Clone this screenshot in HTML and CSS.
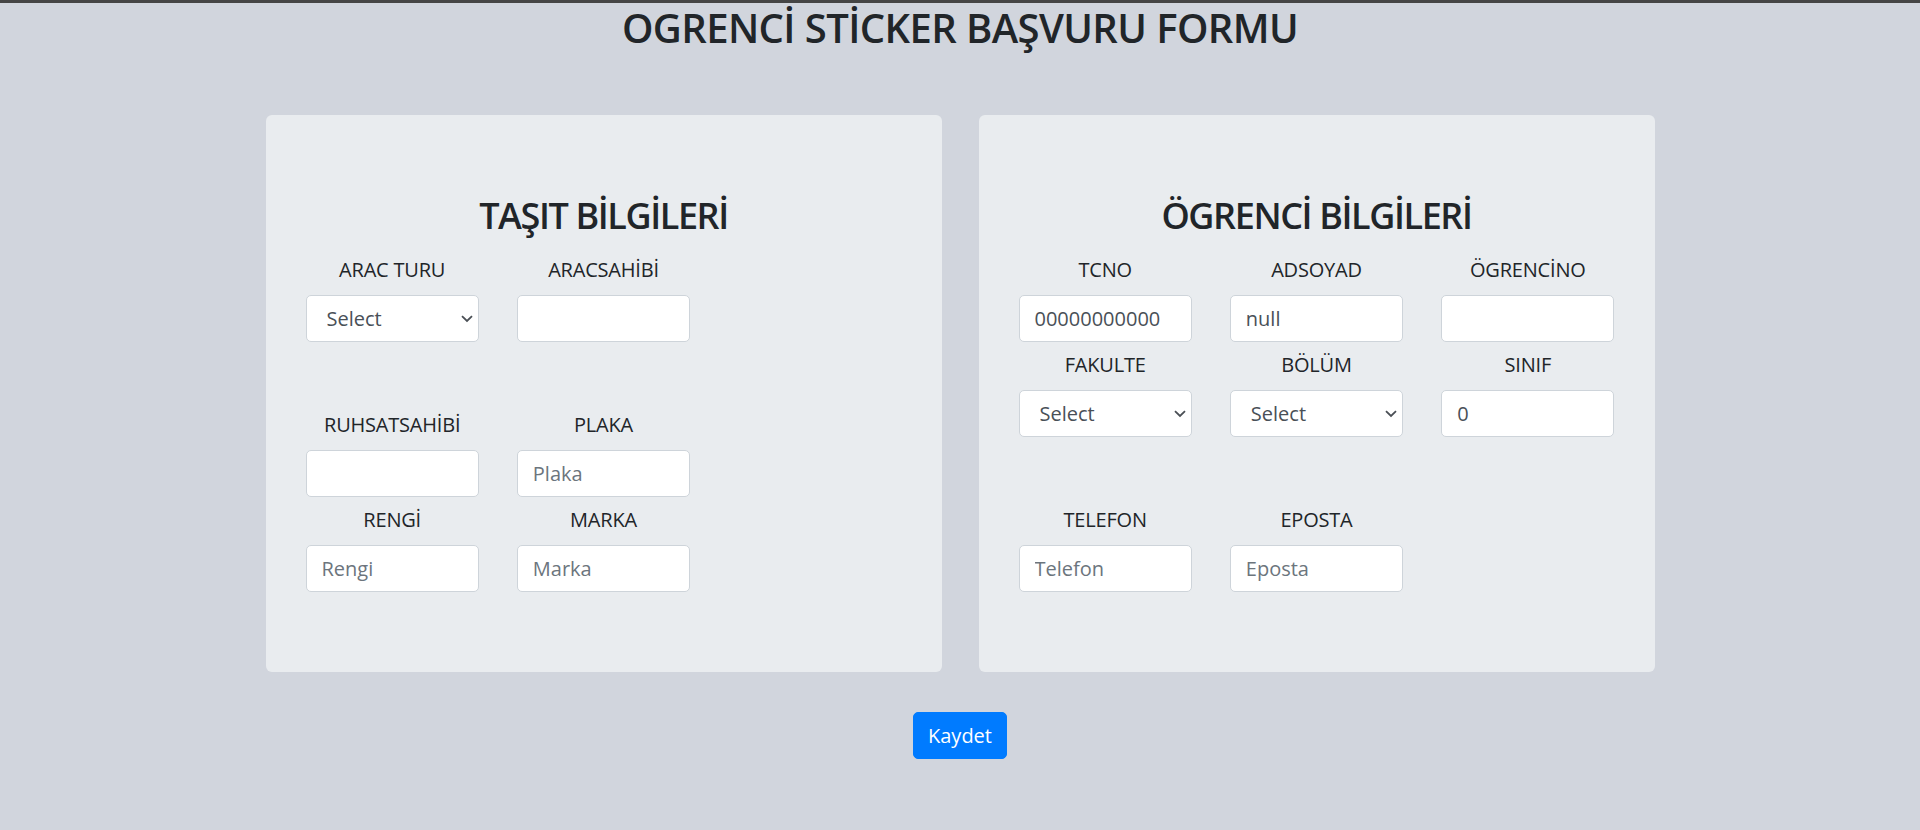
FILE: index.html
```html
<!DOCTYPE html>
<html lang="tr">
<head>
<meta charset="utf-8">
<title>Ogrenci Sticker Başvuru Formu</title>
<link rel="stylesheet" href="styles.css">
</head>
<body>
<div class="topbar"></div>
<h1 class="page-title">OGRENCİ STİCKER BAŞVURU FORMU</h1>
<main class="cards">
  <section class="card">
    <h2 class="card-title">TAŞIT BİLGİLERİ</h2>
    <div class="fields">
      <div class="field">
        <label class="field-label">ARAC TURU</label>
        <div class="select-wrap">
          <select class="control select"><option>Select</option></select>
          <svg class="chevron" width="12" height="8" viewBox="0 0 12 8"><path d="M1 1.2 L6 6 L11 1.2" fill="none" stroke="#4a4f55" stroke-width="1.8"/></svg>
        </div>
      </div>
      <div class="field">
        <label class="field-label">ARACSAHİBİ</label>
        <input class="control" type="text">
      </div>
      <div class="field"></div>
      <div class="spacer"></div>
      <div class="field">
        <label class="field-label">RUHSATSAHİBİ</label>
        <input class="control" type="text">
      </div>
      <div class="field">
        <label class="field-label">PLAKA</label>
        <input class="control" type="text" placeholder="Plaka">
      </div>
      <div class="field"></div>
      <div class="field">
        <label class="field-label">RENGİ</label>
        <input class="control" type="text" placeholder="Rengi">
      </div>
      <div class="field">
        <label class="field-label">MARKA</label>
        <input class="control" type="text" placeholder="Marka">
      </div>
      <div class="field"></div>
    </div>
  </section>
  <section class="card">
    <h2 class="card-title">ÖGRENCİ BİLGİLERİ</h2>
    <div class="fields">
      <div class="field">
        <label class="field-label">TCNO</label>
        <input class="control" type="text" value="00000000000">
      </div>
      <div class="field">
        <label class="field-label">ADSOYAD</label>
        <input class="control" type="text" value="null">
      </div>
      <div class="field">
        <label class="field-label">ÖGRENCİNO</label>
        <input class="control" type="text">
      </div>
      <div class="field">
        <label class="field-label">FAKULTE</label>
        <div class="select-wrap">
          <select class="control select"><option>Select</option></select>
          <svg class="chevron" width="12" height="8" viewBox="0 0 12 8"><path d="M1 1.2 L6 6 L11 1.2" fill="none" stroke="#4a4f55" stroke-width="1.8"/></svg>
        </div>
      </div>
      <div class="field">
        <label class="field-label">BÖLÜM</label>
        <div class="select-wrap">
          <select class="control select"><option>Select</option></select>
          <svg class="chevron" width="12" height="8" viewBox="0 0 12 8"><path d="M1 1.2 L6 6 L11 1.2" fill="none" stroke="#4a4f55" stroke-width="1.8"/></svg>
        </div>
      </div>
      <div class="field">
        <label class="field-label">SINIF</label>
        <input class="control" type="text" value="0">
      </div>
      <div class="spacer"></div>
      <div class="field">
        <label class="field-label">TELEFON</label>
        <input class="control" type="text" placeholder="Telefon">
      </div>
      <div class="field">
        <label class="field-label">EPOSTA</label>
        <input class="control" type="text" placeholder="Eposta">
      </div>
      <div class="field"></div>
    </div>
  </section>
</main>
<div class="actions">
  <button class="btn-primary" type="button">Kaydet</button>
</div>
</body>
</html>
```

FILE: styles.css
```css
* { box-sizing: border-box; }

html, body {
  margin: 0;
  padding: 0;
}

body {
  background: #d1d5dd;
  font-family: "Open Sans", "Noto Sans", "Liberation Sans", sans-serif;
  color: #212529;
  font-size: 20px;
  line-height: 1.5;
}

.topbar {
  height: 3px;
  background: #454545;
}

.page-title {
  margin: 0;
  padding-top: 1px;
  font-size: 40px;
  line-height: 48px;
  font-weight: 600;
  letter-spacing: -0.6px;
  text-align: center;
  color: #212529;
}

.cards {
  width: 1389px;
  margin: 63px auto 0;
  display: grid;
  grid-template-columns: 1fr 1fr;
  column-gap: 37px;
}

.card {
  background: #e9ecef;
  border-radius: 6px;
  padding: 80px 40px;
}

.card-title {
  margin: 0 0 18px;
  font-size: 36px;
  line-height: 42px;
  font-weight: 600;
  letter-spacing: -1.4px;
  text-align: center;
}

.fields {
  display: grid;
  grid-template-columns: repeat(3, 1fr);
  column-gap: 38px;
  row-gap: 8px;
}

.field {
  display: flex;
  flex-direction: column;
  min-height: 87px;
}

.field-label {
  display: block;
  text-align: center;
  line-height: 30px;
  margin-bottom: 10px;
  letter-spacing: -0.2px;
}

.spacer {
  grid-column: 1 / -1;
  height: 52px;
}

.control {
  display: block;
  width: 100%;
  height: 47px;
  padding: 0 15px;
  font-family: inherit;
  font-size: 20px;
  color: #495057;
  background: #fff;
  border: 1px solid #ced4da;
  border-radius: 5px;
  outline: none;
}

.control::placeholder {
  color: #6c757d;
  opacity: 1;
}

.select-wrap {
  position: relative;
}

.select {
  -webkit-appearance: none;
  appearance: none;
  padding-left: 20px;
}

.chevron {
  position: absolute;
  right: 6px;
  top: 20px;
  pointer-events: none;
}

.actions {
  display: flex;
  justify-content: center;
  margin-top: 40px;
}

.btn-primary {
  height: 47px;
  padding: 0 14px;
  font-family: inherit;
  font-size: 20px;
  line-height: 1.5;
  color: #fff;
  background: #007bff;
  border: 1px solid #007bff;
  border-radius: 5px;
}
```
